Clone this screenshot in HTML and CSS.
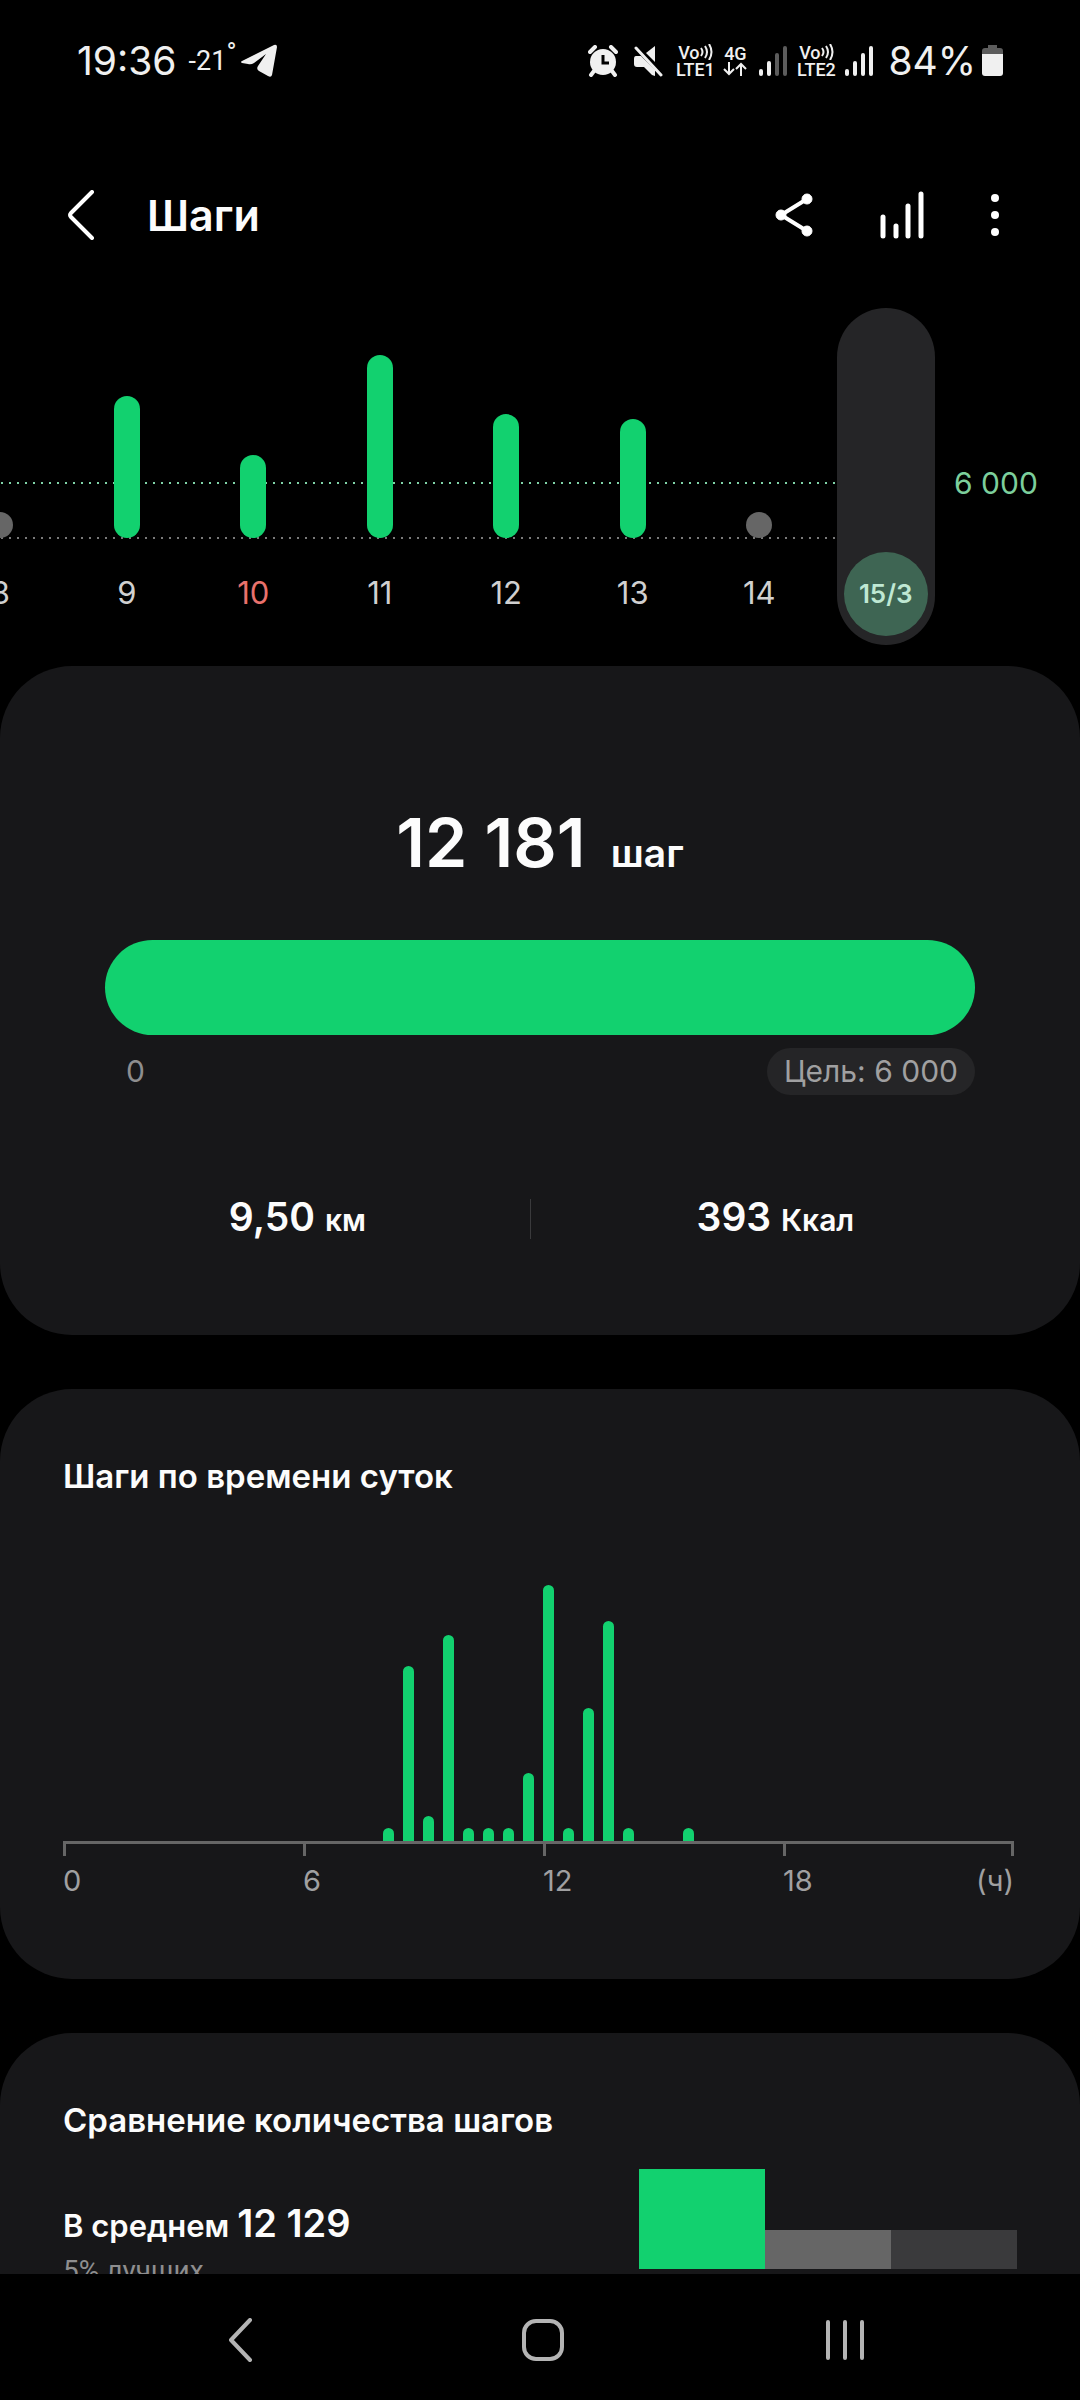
FILE: index.html
```html
<!DOCTYPE html>
<html lang="ru">
<head>
  <meta charset="UTF-8">
  <meta name="viewport" content="width=device-width, initial-scale=1.0">
  <title>Шаги</title>
  <link rel="stylesheet" href="styles.css">
</head>
<body>
  <!-- Status bar -->
  <div class="status-bar">
    <span class="clock">19:36</span>
    <span class="temp">-21<span class="degree">°</span></span>
    <svg class="telegram" width="38" height="34" viewBox="0 0 38 34" fill="#f0f0f0">
      <path d="M2 17 L34 1 Q37 0 37 3 L32 31 Q31 34 28 32 L19 27 Q16 25 18 22 L26 10 L14 19 Q11 21 8 20 L2 19 Q0 18 2 17 Z"/>
    </svg>

    <div class="status-right">
      <svg class="alarm" width="30" height="32" viewBox="0 0 30 32" fill="#f0f0f0" stroke="#f0f0f0" stroke-linecap="round">
        <circle cx="15" cy="17" r="13" stroke="none"/>
        <path d="M2 7 L7 2 M28 7 L23 2" stroke-width="4"/>
        <path d="M6 26 L3 30 M24 26 L27 30" stroke-width="4"/>
        <path d="M15 10 V18 H21" fill="none" stroke="#000" stroke-width="3" stroke-linecap="butt"/>
      </svg>
      <svg class="mute" width="30" height="32" viewBox="0 0 30 32" fill="#f0f0f0">
        <path d="M13 8 L22 1 V17 Z"/>
        <path d="M3 11 H8 L22 25 V31 L19 30 L11 22 H4 Q1 22 1 19 V14 Q1 11 3 11 Z"/>
        <path d="M3 3 L28 30" stroke="#f0f0f0" stroke-width="3" stroke-linecap="round"/>
      </svg>
      <span class="sim sim-lte">
        <span class="vo">Vo<svg width="13" height="16" viewBox="0 0 13 16" fill="none" stroke="#f0f0f0" stroke-width="2"><path d="M1 4 Q4 8 1 12 M5 2 Q9 8 5 14 M9 0 Q14 8 9 16"/></svg></span>
        <span>LTE1</span>
      </span>
      <span class="sim sim-net">
        <span>4G</span>
        <svg width="24" height="14" viewBox="0 0 24 14" fill="none" stroke="#f0f0f0" stroke-width="2"><path d="M6 0 V12 M1 7 L6 12 L11 7 M18 14 V2 M13 7 L18 2 L23 7"/></svg>
      </span>
      <svg class="signal" width="28" height="30" viewBox="0 0 28 30" fill="#f0f0f0">
        <rect x="0" y="23" width="4" height="7" rx="2"/>
        <rect x="8" y="15" width="4" height="15" rx="2"/>
        <rect x="16" y="7" width="4" height="23" rx="2" fill="#5c5c5c"/>
        <rect x="24" y="0" width="4" height="30" rx="2" fill="#5c5c5c"/>
      </svg>
      <span class="sim sim-lte">
        <span class="vo">Vo<svg width="13" height="16" viewBox="0 0 13 16" fill="none" stroke="#f0f0f0" stroke-width="2"><path d="M1 4 Q4 8 1 12 M5 2 Q9 8 5 14 M9 0 Q14 8 9 16"/></svg></span>
        <span>LTE2</span>
      </span>
      <svg class="signal" width="28" height="30" viewBox="0 0 28 30" fill="#f0f0f0">
        <rect x="0" y="23" width="4" height="7" rx="2"/>
        <rect x="8" y="15" width="4" height="15" rx="2"/>
        <rect x="16" y="7" width="4" height="23" rx="2"/>
        <rect x="24" y="0" width="4" height="30" rx="2"/>
      </svg>
      <span class="percent">84%</span>
      <svg class="battery" width="21" height="32" viewBox="0 0 21 32">
        <path d="M6 0 H15 V3 H18 Q21 3 21 6 V12 H0 V6 Q0 3 3 3 H6 Z" fill="#5c5c5c"/>
        <path d="M0 9 H21 V28 Q21 31 18 31 H3 Q0 31 0 28 Z" fill="#f0f0f0"/>
      </svg>
    </div>
  </div>

  <!-- App bar -->
  <header class="app-bar">
    <button class="icon-btn" aria-label="Назад">
      <svg width="28" height="50" viewBox="0 0 28 50" fill="none" stroke="#fff" stroke-width="4" stroke-linecap="round" stroke-linejoin="round"><path d="M25 2 L4 23 Q2 25 4 27 L25 48"/></svg>
    </button>
    <h1>Шаги</h1>
    <div class="actions">
      <button class="icon-btn" aria-label="Поделиться">
        <svg width="38" height="46" viewBox="0 0 38 46" fill="#fff" stroke="#fff"><path d="M32 7 L6 23 L32 39" fill="none" stroke-width="4"/><circle cx="32" cy="7" r="5"/><circle cx="6" cy="23" r="5"/><circle cx="32" cy="39" r="5"/></svg>
      </button>
      <button class="icon-btn" aria-label="Статистика">
        <svg width="44" height="50" viewBox="0 0 44 50" stroke="#fff" stroke-width="5" stroke-linecap="round"><path d="M3 27 V46 M16 36 V46 M28 16 V46 M41 4 V46"/></svg>
      </button>
      <button class="icon-btn" aria-label="Ещё">
        <svg width="8" height="42" viewBox="0 0 8 42" fill="#fff"><circle cx="4" cy="4" r="4"/><circle cx="4" cy="21" r="4"/><circle cx="4" cy="38" r="4"/></svg>
      </button>
    </div>
  </header>

  <main>
    <!-- Days -->
    <div class="week">
      <div class="days">
        <div class="day"><div class="track"><div class="bar missed" style="height: 26px"></div></div><span>8</span></div>
        <div class="day"><div class="track"><div class="bar" style="height: 142px"></div></div><span>9</span></div>
        <div class="day sunday"><div class="track"><div class="bar" style="height: 83px"></div></div><span>10</span></div>
        <div class="day"><div class="track"><div class="bar" style="height: 183px"></div></div><span>11</span></div>
        <div class="day"><div class="track"><div class="bar" style="height: 124px"></div></div><span>12</span></div>
        <div class="day"><div class="track"><div class="bar" style="height: 119px"></div></div><span>13</span></div>
        <div class="day"><div class="track"><div class="bar missed" style="height: 26px"></div></div><span>14</span></div>
        <div class="day"><div class="today"><span>15/3</span></div></div>
      </div>
      <div class="goal-label">6 000</div>
    </div>

    <!-- Summary -->
    <section class="card summary">
      <p class="total">12 181 <small>шаг</small></p>
      <div class="progress"></div>
      <div class="range">
        <span>0</span>
        <span class="goal">Цель: 6 000</span>
      </div>
      <div class="stats">
        <p>9,50 <small>км</small></p>
        <div class="divider"></div>
        <p>393 <small>Ккал</small></p>
      </div>
    </section>

    <!-- Steps by hour -->
    <section class="card hourly">
      <h2>Шаги по времени суток</h2>
      <div class="hours" id="hours"></div>
      <div class="axis"><i></i><i></i><i></i><i></i></div>
      <div class="axis-labels">
        <span>0</span>
        <span>6</span>
        <span>12</span>
        <span class="last"><span>18</span><span>(ч)</span></span>
      </div>
    </section>

    <!-- Comparison -->
    <section class="card compare">
      <h2>Сравнение количества шагов</h2>
      <div class="compare-row">
        <div>
          <p class="average">В среднем <b>12 129</b></p>
          <p class="rank">5% лучших</p>
        </div>
        <div class="levels">
          <div class="level top"></div>
          <div class="level middle"></div>
          <div class="level low"></div>
        </div>
      </div>
    </section>
  </main>

  <!-- System navigation -->
  <nav class="nav-bar">
    <button class="icon-btn" aria-label="Назад">
      <svg width="32" height="44" viewBox="0 0 32 44" fill="none" stroke="#b4b4b4" stroke-width="4" stroke-linecap="round" stroke-linejoin="round"><path d="M22 2 L3 22 L22 42"/></svg>
    </button>
    <button class="icon-btn" aria-label="Домой">
      <svg width="42" height="42" viewBox="0 0 42 42" fill="none" stroke="#b4b4b4" stroke-width="4"><rect x="2" y="2" width="38" height="38" rx="12"/></svg>
    </button>
    <button class="icon-btn" aria-label="Недавние">
      <svg width="38" height="42" viewBox="0 0 38 42" stroke="#b4b4b4" stroke-width="4" stroke-linecap="round"><path d="M2 3 V39 M19 3 V39 M36 3 V39"/></svg>
    </button>
  </nav>

  <script>
    // Bar heights for each half hour, from 0:00
    const heights = { 16: 13, 17: 175, 18: 25, 19: 206, 20: 13, 21: 13, 22: 13, 23: 68, 24: 256, 25: 13, 26: 133, 27: 220, 28: 13, 31: 13 };
    let bars = '';
    for (let i = 0; i < 48; i++) {
      bars += `<i style="height: ${heights[i] || 0}px"></i>`;
    }
    document.getElementById('hours').innerHTML = bars;
  </script>
</body>
</html>
```

FILE: styles.css
```css
* {
  box-sizing: border-box;
}
body {
  margin: 0;
  height: 100vh;
  display: flex;
  flex-direction: column;
  overflow: hidden;
  background: #000;
  color: #fcfcfc;
  font-family: Inter, Roboto, sans-serif;
}
h1, h2, p {
  margin: 0;
}
h2 {
  font-size: 33px;
  line-height: 40px;
  font-weight: 600;
}
.icon-btn {
  display: flex;
  padding: 0;
  border: 0;
  background: none;
  cursor: pointer;
}

/* Status bar */
.status-bar {
  display: flex;
  align-items: center;
  flex-shrink: 0;
  height: 121px;
  padding: 0 77px;
  color: #f0f0f0;
}
.clock,
.percent {
  font-size: 39px;
}
.temp {
  position: relative;
  margin-left: 12px;
  font-family: "Liberation Sans Narrow", Roboto, sans-serif;
  font-size: 27px;
}
.degree {
  position: absolute;
  top: -8px;
  left: 100%;
}
.telegram {
  margin-left: 14px;
}
.status-right {
  display: flex;
  align-items: center;
  margin-left: auto;
}
.mute {
  margin-left: 15px;
}
.sim {
  display: flex;
  flex-direction: column;
  align-items: center;
  font-family: Roboto, sans-serif;
  font-size: 18px;
  font-weight: 500;
  line-height: 17px;
}
.sim-lte {
  width: 40px;
  margin-left: 12px;
}
.vo {
  display: flex;
}
.sim-net {
  margin-left: 8px;
}
.signal {
  margin-left: 12px;
}
.signal + .sim-lte {
  margin-left: 9px;
}
.sim-lte + .signal {
  margin-left: 9px;
}
.percent {
  margin-left: 15px;
}
.battery {
  margin-left: 6px;
}

/* App bar */
.app-bar {
  display: flex;
  align-items: center;
  flex-shrink: 0;
  height: 187px;
  padding: 0 81px 0 67px;
}
.app-bar h1 {
  margin-left: 52px;
  font-size: 43px;
  line-height: 50px;
  font-weight: 600;
}
.actions {
  display: flex;
  align-items: center;
  gap: 67px;
  margin-left: auto;
}

/* Content */
main {
  flex: 1;
  min-height: 0;
  overflow: hidden;
}
.week {
  display: flex;
  height: 337px;
  margin-bottom: 21px;
}
.days {
  position: relative;
  display: flex;
  flex: 1;
  margin-left: -63px;
}
/* goal line and base line */
.days::before,
.days::after {
  content: "";
  position: absolute;
  left: 0;
  right: 63px;
  top: 174px;
  height: 2px;
  background: repeating-linear-gradient(90deg, #7fd3a8 0 2px, transparent 2px 8px);
}
.days::after {
  top: 229px;
  background: repeating-linear-gradient(90deg, #7a7a7a 0 2px, transparent 2px 8px);
}
.day {
  position: relative;
  z-index: 1;
  flex: 1;
  display: flex;
  flex-direction: column;
  align-items: center;
  color: #d0d0d0;
  font-size: 31px;
  line-height: 36px;
}
.sunday {
  color: #e9716c;
}
.track {
  display: flex;
  align-items: flex-end;
  height: 230px;
  margin-bottom: 37px;
}
.bar {
  width: 26px;
  border-radius: 13px;
  background: #12d16f;
}
.missed {
  background: #666;
}
.today {
  display: flex;
  align-items: flex-end;
  width: 98px;
  height: 100%;
  padding: 0 7px 9px;
  border-radius: 49px;
  background: #252527;
}
.today span {
  width: 84px;
  height: 84px;
  border-radius: 50%;
  background: #3e6553;
  color: #bfe8d3;
  font-size: 26px;
  font-weight: 600;
  line-height: 84px;
  text-align: center;
}
.goal-label {
  width: 131px;
  padding: 157px 0 0 5px;
  color: #7ccf9c;
  font-size: 30px;
  line-height: 36px;
}

.card {
  margin-bottom: 54px;
  border-radius: 72px;
  background: #171719;
}
.summary {
  height: 669px;
  padding: 134px 105px 0;
}
.total {
  font-size: 68px;
  line-height: 84px;
  font-weight: 600;
  text-align: center;
}
.total small {
  margin-left: 8px;
  font-size: 39px;
}
.progress {
  height: 95px;
  margin-top: 45px;
  border-radius: 48px;
  background: #12d16f;
}
.range {
  display: flex;
  justify-content: space-between;
  margin-top: 13px;
  padding-left: 21px;
  color: #8e8e8f;
  font-size: 30px;
  line-height: 47px;
}
.goal {
  padding: 0 17px;
  border-radius: 24px;
  background: #252527;
  color: #a0a0a1;
}
.stats {
  display: grid;
  grid-template-columns: 19fr 1px 20fr;
  align-items: center;
  margin: 97px -45px 0 -40px;
  font-size: 39px;
  line-height: 50px;
  font-weight: 600;
  text-align: center;
}
.stats small {
  font-size: 30px;
}
.divider {
  height: 40px;
  background: #3a3a3c;
}

.hourly {
  height: 590px;
  padding: 67px 66px 0 63px;
}
.hours {
  display: flex;
  align-items: flex-end;
  justify-content: space-between;
  height: 256px;
  margin-top: 89px;
}
.hours i {
  width: 11px;
  border-radius: 6px 6px 0 0;
  background: #12d16f;
}
.axis,
.axis-labels {
  display: grid;
  grid-template-columns: 240fr 240fr 240fr 231fr;
}
.axis {
  border-top: 3px solid #666;
}
.axis i {
  height: 12px;
  border-left: 3px solid #666;
}
.axis i:last-child {
  border-right: 3px solid #666;
}
.axis-labels {
  margin-top: 7px;
  color: #a0a0a1;
  font-size: 29px;
  line-height: 36px;
}
.last {
  display: flex;
  justify-content: space-between;
}

.compare {
  padding: 67px 63px 60px;
}
.compare-row {
  display: flex;
  justify-content: space-between;
  margin-top: 29px;
}
.average {
  margin-top: 29px;
  font-size: 31px;
  line-height: 50px;
  font-weight: 600;
}
.average b {
  font-size: 38px;
  font-weight: 600;
}
.rank {
  margin-top: 2px;
  color: #8e8e8f;
  font-family: Roboto, sans-serif;
  font-size: 28px;
  line-height: 36px;
}
.levels {
  display: flex;
  align-items: flex-end;
  width: 378px;
  height: 100px;
}
.level {
  flex: 1;
  height: 39px;
  background: #666;
}
.top {
  height: 100px;
  background: #12d16f;
}
.low {
  background: #3a3a3c;
}

/* System navigation */
.nav-bar {
  display: flex;
  align-items: center;
  justify-content: space-between;
  flex-shrink: 0;
  height: 126px;
  padding: 6px 216px 0 228px;
}
```
